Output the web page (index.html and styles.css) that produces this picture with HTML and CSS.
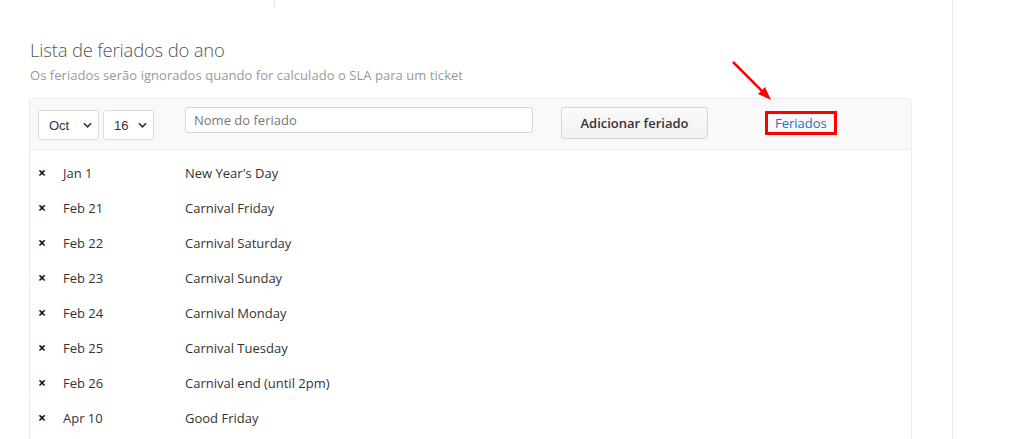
FILE: index.html
```html
<!DOCTYPE html>
<html>
<head>
<meta charset="utf-8">
<link rel="stylesheet" href="styles.css">
</head>
<body>
<div class="page">
  <div class="main">
    <div class="topline"></div>
    <h2 class="title">Lista de feriados do ano</h2>
    <p class="subtitle">Os feriados serão ignorados quando for calculado o SLA para um ticket</p>
    <div class="panel">
      <div class="panel-head">
        <div class="sel sel-month">Oct<svg class="chev" viewBox="0 0 10 6"><path d="M1 1l4 4 4-4" fill="none" stroke="#333" stroke-width="1.8"/></svg></div>
        <div class="sel sel-day">16<svg class="chev" viewBox="0 0 10 6"><path d="M1 1l4 4 4-4" fill="none" stroke="#333" stroke-width="1.8"/></svg></div>
        <div class="input">Nome do feriado</div>
        <div class="btn">Adicionar feriado</div>
        <div class="link-wrap">
          <span class="link">Feriados</span>
          <svg class="arrow" width="50" height="50" viewBox="0 0 50 50"><line x1="6" y1="6" x2="38" y2="38" stroke="#f00" stroke-width="2.5"/><polygon points="44,44 31,38 38,31" fill="#f00"/></svg>
        </div>
      </div>
      <div class="rows">
        <div class="row"><span class="x">×</span><span class="date">Jan 1</span><span class="name">New Year's Day</span></div>
        <div class="row"><span class="x">×</span><span class="date">Feb 21</span><span class="name">Carnival Friday</span></div>
        <div class="row"><span class="x">×</span><span class="date">Feb 22</span><span class="name">Carnival Saturday</span></div>
        <div class="row"><span class="x">×</span><span class="date">Feb 23</span><span class="name">Carnival Sunday</span></div>
        <div class="row"><span class="x">×</span><span class="date">Feb 24</span><span class="name">Carnival Monday</span></div>
        <div class="row"><span class="x">×</span><span class="date">Feb 25</span><span class="name">Carnival Tuesday</span></div>
        <div class="row"><span class="x">×</span><span class="date">Feb 26</span><span class="name">Carnival end (until 2pm)</span></div>
        <div class="row"><span class="x">×</span><span class="date">Apr 10</span><span class="name">Good Friday</span></div>
      </div>
    </div>
  </div>
  <div class="side"></div>
</div>
</body>
</html>
```
FILE: styles.css
```css
* { box-sizing: border-box; }
html, body { margin: 0; padding: 0; background: #fff; overflow: hidden; }
body { font-family: "Open Sans", "Noto Sans", sans-serif; color: #333; font-size: 13px; }
.page { display: flex; width: 1033px; height: 439px; overflow: hidden; }
.main { width: 952px; padding-left: 29px; position: relative; }
.side { width: 81px; border-left: 1px solid #e8e8e8; }
.topline { position: absolute; left: 274px; top: 0; width: 1px; height: 6px; background: #e4e4e4; }
.title { margin: 0; padding-top: 37px; padding-left: 1px; font-size: 18.5px; font-weight: 300; color: #555; line-height: 26px; letter-spacing: -0.2px; }
.subtitle { margin: 3px 0 0 1px; font-size: 13px; color: #999; line-height: 18px; letter-spacing: 0.05px; }
.panel { margin-top: 14px; width: 883px; border: 1px solid #ececec; border-bottom: none; border-radius: 4px 4px 0 0; height: 341px; }
.panel-head { background: #f9f9f9; border-bottom: 1px solid #ececec; height: 51px; display: flex; align-items: flex-start; padding-left: 8px; position: relative; }
.sel { height: 30px; margin-top: 11px; border: 1px solid #dcdcdc; border-radius: 3px; background: #fff; display: flex; align-items: center; justify-content: space-between; padding: 0 6px 0 10px; font-family: "Liberation Sans", Arial, sans-serif; font-size: 13px; color: #333; }
.sel-month { width: 61px; }
.sel-day { width: 51px; margin-left: 4px; }
.chev { width: 9px; height: 6px; }
.input { margin-left: 31px; margin-top: 8px; width: 348px; height: 26px; border: 1px solid #d6d6d6; border-radius: 3px; background: #fff; padding-left: 8px; line-height: 24px; color: #777; font-size: 13px; }
.btn { margin-left: 28px; margin-top: 8px; width: 147px; height: 32px; border: 1px solid #d6d6d6; border-radius: 3px; background: linear-gradient(#fbfbfb, #f1f1f1); text-align: center; line-height: 30px; font-weight: 600; color: #333; font-size: 13px; }
.link-wrap { margin-left: 57px; margin-top: 12px; position: relative; }
.link { display: block; border: 3px solid #f00; padding: 0 7px; height: 24px; line-height: 18px; color: #2a6ec7; font-size: 13px; }
.arrow { position: absolute; left: -38px; top: -55px; }
.rows { padding-top: 5px; }
.row { height: 35px; display: flex; align-items: center; }
.x { width: 33px; padding-left: 8px; font-weight: 700; font-size: 14px; color: #111; }
.date { width: 122px; }
```
